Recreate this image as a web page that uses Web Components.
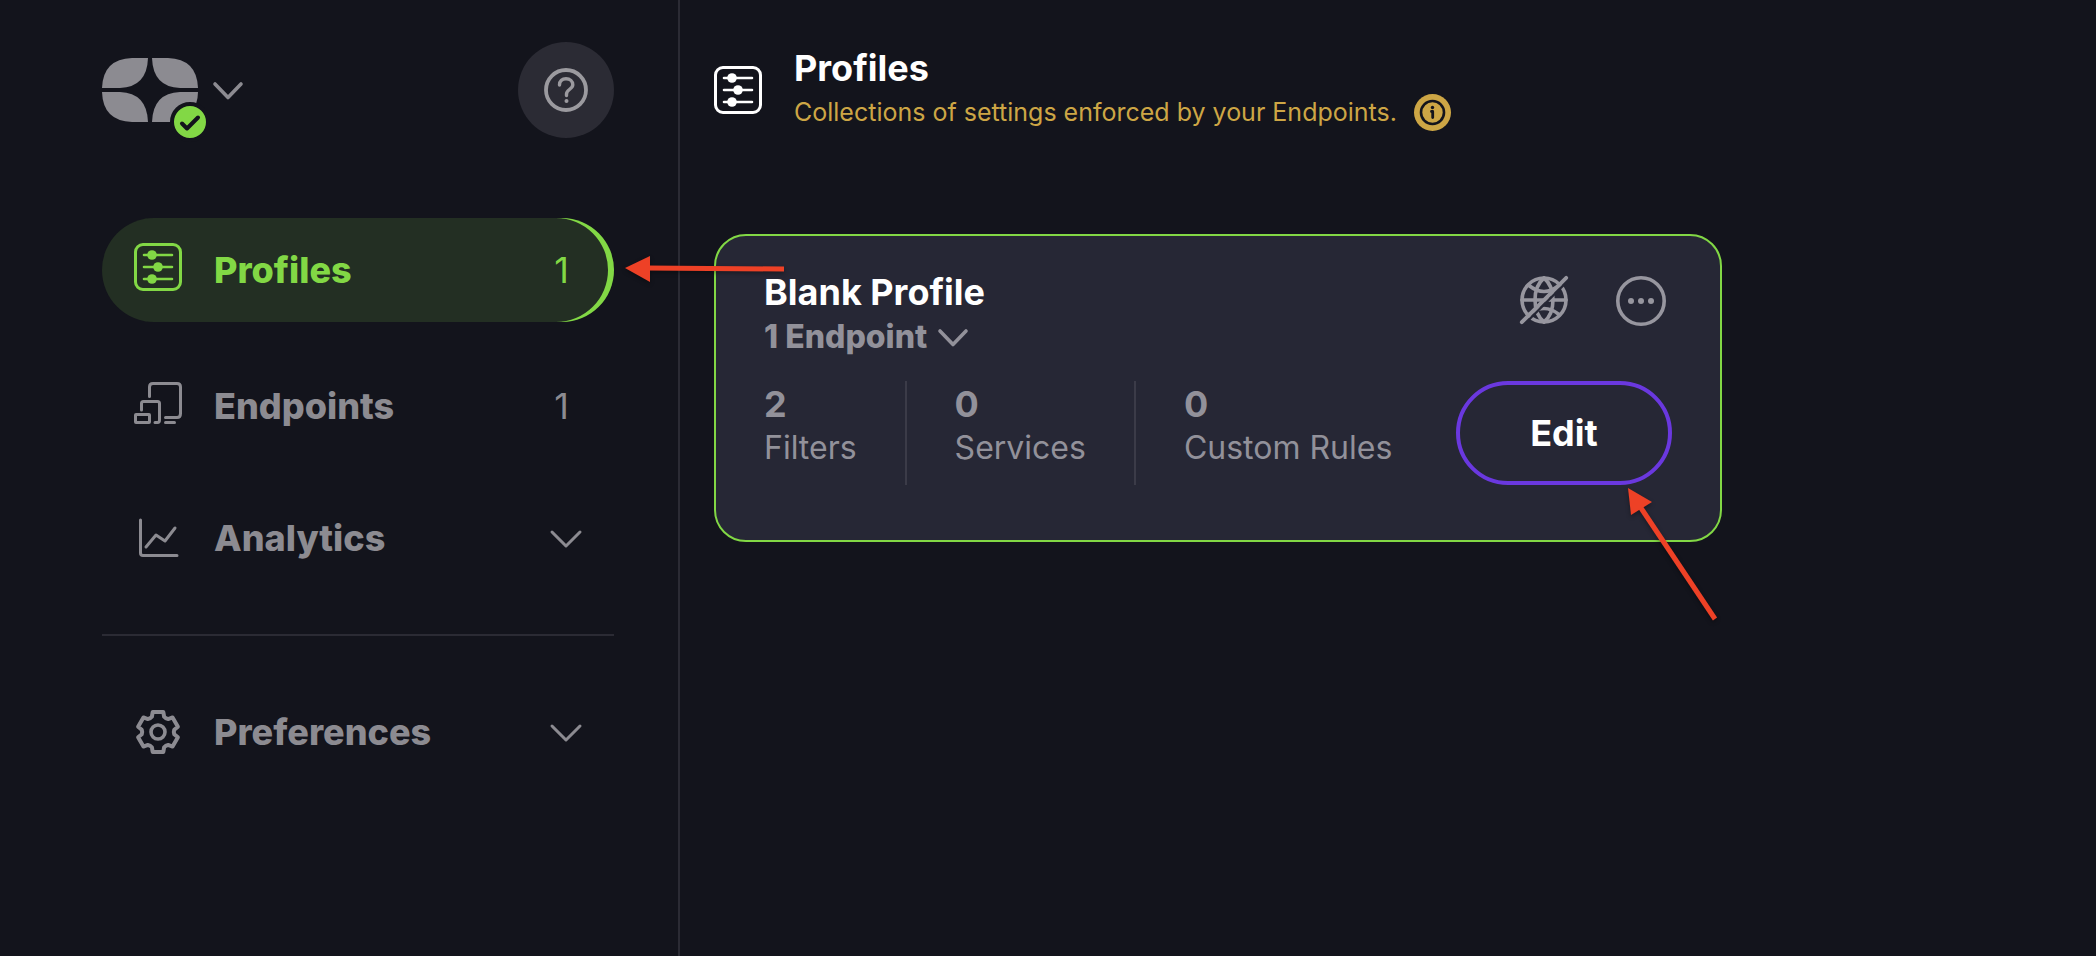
<!DOCTYPE html>
<html lang="en">
<head>
<meta charset="utf-8">
<meta name="viewport" content="width=device-width, initial-scale=1">
<title>Profiles</title>
<style>
  :root {
    --bg: #13141c;
    --line: #2b2b34;
    --muted: #8c8b91;
    --green: #82d845;
    --gold: #cda645;
    --red: #ee4126;
  }
  body {
    margin: 0;
    min-height: 100vh;
    background: var(--bg);
    color: #fff;
    font-family: Inter, "Open Sans", sans-serif;
    overflow-x: hidden;
  }
</style>
</head>
<body>
<app-shell>
  <side-bar slot="sidebar">
    <nav-item icon="profiles" count="1" active>Profiles</nav-item>
    <nav-item icon="endpoints" count="1">Endpoints</nav-item>
    <nav-item icon="analytics" expandable>Analytics</nav-item>
    <nav-item slot="footer" icon="gear" expandable>Preferences</nav-item>
  </side-bar>
  <page-header>
    <span slot="title">Profiles</span>
    <span slot="subtitle">Collections of settings enforced by your Endpoints.</span>
  </page-header>
  <profile-card>
    <span slot="name">Blank Profile</span>
    <span slot="endpoints">1 Endpoint</span>
    <stat-item value="2">Filters</stat-item>
    <stat-item value="0">Services</stat-item>
    <stat-item value="0">Custom Rules</stat-item>
  </profile-card>
</app-shell>

<script>
const gearPath = (() => {
  const pt = (r, deg) => {
    const a = deg * Math.PI / 180;
    return (24 + r * Math.cos(a)).toFixed(2) + ' ' + (24 + r * Math.sin(a)).toFixed(2);
  };
  let d = '';
  for (let a = -90; a < 270; a += 60) {
    d += (d ? 'Q' + pt(15.4, a - 30) + ' ' : 'M') + pt(16.4, a - 22);
    d += 'L' + pt(20.6, a - 15) + 'L' + pt(20.6, a + 15) + 'L' + pt(16.4, a + 22);
  }
  return d + 'Q' + pt(15.4, -120) + ' ' + pt(16.4, -112) + 'Z';
})();

const ICONS = {
  profiles: [48, 48, `<rect x="1.5" y="1.5" width="45" height="45" rx="7.5" stroke-width="3"/>
    <path d="M10 12H38M10 24H38M10 36H38" stroke-width="2.6"/>
    <g fill="currentColor" stroke="none"><circle cx="18" cy="12" r="4.8"/><circle cx="24" cy="24" r="4.8"/><circle cx="18" cy="36" r="4.8"/></g>`],
  endpoints: [48, 48, `<g stroke-width="3"><path d="M15.5 14.5V5Q15.500 1.500 19 1.500H43Q46.500 1.500 46.500 5V31.500Q46.500 35.500 43 35.500H31.500"/>
    <path d="M7.500 28V21.500Q7.500 19.500 9.500 19.500H23.500Q25.500 19.500 25.500 21.500V38Q25.500 40.500 23.500 40.500H21"/>
    <rect x="1.500" y="32.500" width="14" height="8" rx="0.500"/><path d="M31.500 40.500H40.500"/></g>`],
  analytics: [48, 48, `<g stroke-width="3"><path d="M6.500 6V39Q6.500 41.500 9 41.500H43"/><path d="M12 33L22 21L31 27L41 14"/></g>`],
  gear: [48, 48, `<path d="${gearPath}" stroke-width="4"/><circle cx="24" cy="24" r="7" stroke-width="3.600"/>`],
  chevron: [32, 20, `<path d="M2 4L16 18L30 4" stroke-width="3"/>`],
  caret: [32, 20, `<path d="M3 4L16 17.500L29 4" stroke-width="3.600"/>`],
  logo: [96, 64, `<g fill="currentColor" stroke="none">
    <path d="M46 0Q45 29 18 30H0Q1 1 30 0Z"/><path d="M50 0H66Q95 1 96 30H78Q51 29 50 0Z"/>
    <path d="M0 34H18Q45 35 46 64H30Q1 63 0 34Z"/><path d="M50 64Q51 35 78 34H96Q96 40 94 46L82 50L68 64Z"/></g>`],
  check: [40, 40, `<circle cx="20" cy="20" r="18" fill="#82d845" stroke="#13141c" stroke-width="4"/>
    <path d="M12 21.500L17 26.500L28 15.500" stroke="#13141c" stroke-width="4"/>`],
  help: [44, 44, `<circle cx="22" cy="22" r="20" stroke-width="3.800"/>
    <path d="M15.500 17C15.500 12.800 18.300 10.800 22 10.800C26 10.800 28.800 13.500 28.800 16.800C28.800 21 22.500 21.500 22.500 26V27.500" stroke-width="3.400"/>
    <circle cx="22.500" cy="33" r="2" fill="currentColor" stroke="none"/>`],
  info: [37, 37, `<circle cx="18.500" cy="18.500" r="18.500" fill="currentColor" stroke="none"/>
    <circle cx="18.500" cy="18.500" r="11.500" stroke="#13141c" stroke-width="2.600"/>
    <path d="M17.500 17.500H18.700V23.500" stroke="#13141c" stroke-width="2.800"/><circle cx="18.500" cy="13.500" r="1.700" fill="#13141c" stroke="none"/>`],
  globe: [48, 48, `<g stroke-width="3.600"><circle cx="24" cy="24" r="22"/>
    <path d="M2 24H46M24 2C12 12 12 36 24 46M24 2C36 12 36 36 24 46"/>
    <path d="M9 9.500Q24 21.500 39 9.500M9 38.500Q24 26.500 39 38.500"/></g>
    <path d="M4.600 48L48 4.600" stroke="#262735" stroke-width="2.400"/><path d="M1.800 46.200L46.200 1.800" stroke-width="3.800"/>`],
  dots: [50, 50, `<circle cx="25" cy="25" r="23.200" stroke-width="3.600"/>
    <g fill="currentColor" stroke="none"><circle cx="15" cy="25" r="3"/><circle cx="25" cy="25" r="3"/><circle cx="35" cy="25" r="3"/></g>`]
};

const RESET = `
  button, a { font: inherit; color: inherit; background: none; border: 0; padding: 0; margin: 0; text-decoration: none; cursor: pointer; text-align: left; }
`;

function define(name, html) {
  customElements.define(name, class extends HTMLElement {
    constructor() {
      super();
      this.attachShadow({ mode: 'open' });
    }
    connectedCallback() {
      this.shadowRoot.innerHTML = typeof html === 'function' ? html(this) : html;
    }
  });
}

define('ui-icon', el => {
  const [w, h, body] = ICONS[el.getAttribute('name')];
  return `<style>:host { display: block; flex: none; line-height: 0; } svg { display: block; overflow: visible; }</style>
    <svg width="${w}" height="${h}" viewBox="0 0 ${w} ${h}" fill="none" stroke="currentColor" stroke-linecap="round" stroke-linejoin="round" aria-hidden="true">${body}</svg>`;
});

define('callout-arrow', el => {
  const w = +el.getAttribute('width'), h = +el.getAttribute('height');
  return `<style>
      :host { position: absolute; pointer-events: none; color: var(--red); }
      svg { display: block; overflow: visible; filter: drop-shadow(0 2px 2px rgba(0, 0, 0, .35)); }
    </style>
    <svg width="${w}" height="${h}" viewBox="0 0 ${w} ${h}" aria-hidden="true">
      <path d="${el.getAttribute('shaft')}" stroke="currentColor" stroke-width="5" fill="none"/>
      <polygon points="${el.getAttribute('head')}" fill="currentColor"/>
    </svg>`;
});

define('app-shell', `
  <style>
    :host { display: flex; min-height: 100vh; }
    main { flex: 1; min-width: 0; box-sizing: border-box; padding: 46px 34px; display: flex; flex-direction: column; gap: 100px; }
  </style>
  <slot name="sidebar"></slot>
  <main><slot></slot></main>`);

define('side-bar', `
  <style>${RESET}
    :host { flex: none; box-sizing: border-box; width: 680px; padding: 42px 64px 42px 102px; border-right: 2px solid var(--line); color: var(--muted); }
    header { display: flex; align-items: center; justify-content: space-between; margin-bottom: 80px; }
    .account { display: flex; align-items: center; gap: 14px; }
    .mark { position: relative; }
    .status { position: absolute; right: -12px; bottom: -20px; }
    .help { width: 96px; height: 96px; border-radius: 50%; background: var(--line); color: #9b9a9f; display: grid; place-items: center; }
    nav { display: flex; flex-direction: column; gap: 32px; }
    hr { width: 100%; border: 0; border-top: 2px solid var(--line); margin: 48px 0; }
  </style>
  <header>
    <button class="account" aria-label="Account">
      <span class="mark"><ui-icon name="logo"></ui-icon><ui-icon class="status" name="check"></ui-icon></span>
      <ui-icon name="caret"></ui-icon>
    </button>
    <button class="help" aria-label="Help"><ui-icon name="help"></ui-icon></button>
  </header>
  <nav aria-label="Main"><slot></slot></nav>
  <hr>
  <slot name="footer"></slot>`);

define('nav-item', el => {
  const exp = el.hasAttribute('expandable');
  const tag = exp ? 'button' : 'a';
  const attrs = exp ? 'aria-expanded="false"' : 'href="#"';
  return `
  <style>${RESET}
    :host { display: block; }
    .row { display: flex; align-items: center; box-sizing: border-box; width: 100%; height: ${exp ? 96 : 104}px; padding: 0 32px; gap: 32px; border-radius: 52px; font-size: 36px; line-height: 44px; font-weight: 800; }
    .count { font-weight: 400; padding-right: 13px; }
    .label { flex: 1; }
    :host([active]) .row { background: #232f23; color: var(--green); box-shadow: inset -6px 0 0 var(--green); }
    :host([active]) ui-icon { margin-bottom: 6px; }
  </style>
  <${tag} class="row" ${attrs}>
    <ui-icon name="${el.getAttribute('icon')}"></ui-icon>
    <span class="label"><slot></slot></span>
    ${exp ? '<ui-icon name="chevron"></ui-icon>' : `<span class="count">${el.getAttribute('count')}</span>`}
  </${tag}>`;
});

define('page-header', `
  <style>${RESET}
    :host { display: flex; align-items: center; gap: 32px; }
    h1 { margin: 0; font-size: 36px; line-height: 44px; font-weight: 700; }
    .sub { display: flex; align-items: center; gap: 17px; height: 44px; color: var(--gold); }
    p { margin: 0; font-size: 25px; line-height: 44px; }
  </style>
  <ui-icon name="profiles"></ui-icon>
  <div>
    <h1><slot name="title"></slot></h1>
    <div class="sub">
      <p><slot name="subtitle"></slot></p>
      <button aria-label="More information"><ui-icon name="info"></ui-icon></button>
    </div>
  </div>`);

define('stat-item', el => `
  <style>
    :host { display: block; height: 104px; box-sizing: border-box; padding: 2px 48px 0 0; color: #92919a; }
    :host(:not(:last-of-type)) { border-right: 2px solid #3b3b48; margin-right: 48px; }
    dl { margin: 0; display: flex; flex-direction: column-reverse; line-height: 43px; white-space: nowrap; }
    dt { font-size: 32px; font-weight: 400; }
    dd { margin: 0; font-size: 36px; font-weight: 700; }
  </style>
  <dl><dt><slot></slot></dt><dd>${el.getAttribute('value')}</dd></dl>`);

define('profile-card', `
  <style>${RESET}
    :host { position: relative; display: flex; flex-direction: column; gap: 22px; box-sizing: border-box; width: 100%; max-width: 1008px; padding: 34px 48px 55px; border: 2px solid var(--green); border-radius: 32px; background: #262735; }
    .top, .bottom { display: flex; justify-content: space-between; }
    h2 { margin: 0; font-size: 36px; line-height: 44px; font-weight: 700; }
    .toggle { display: flex; align-items: center; gap: 10px; font-size: 32px; line-height: 45px; font-weight: 800; color: #92919a; }
    .actions { display: flex; align-items: flex-start; gap: 48px; padding: 6px 6px 0 0; color: #97969f; }
    .stats { display: flex; }
    .edit { width: 216px; height: 104px; border: 4px solid #6a38df; border-radius: 52px; box-sizing: border-box; font-size: 36px; line-height: 44px; font-weight: 700; text-align: center; }
    .to-nav { left: -91px; top: 20px; }
    .to-edit { left: 912px; top: 252px; }
  </style>
  <div class="top">
    <div>
      <h2><slot name="name"></slot></h2>
      <button class="toggle" aria-expanded="false"><slot name="endpoints"></slot><ui-icon name="caret"></ui-icon></button>
    </div>
    <div class="actions">
      <button aria-label="Web access off"><ui-icon name="globe"></ui-icon></button>
      <button aria-label="More options"><ui-icon name="dots"></ui-icon></button>
    </div>
  </div>
  <div class="bottom">
    <div class="stats"><slot></slot></div>
    <button class="edit">Edit</button>
  </div>
  <callout-arrow class="to-nav" width="160" height="28" shaft="M22 12L159 13" head="0,12 25,0 25,26"></callout-arrow>
  <callout-arrow class="to-edit" width="88" height="132" shaft="M11 17L87 131" head="0,0 24,14 3,27"></callout-arrow>`);
</script>
</body>
</html>
